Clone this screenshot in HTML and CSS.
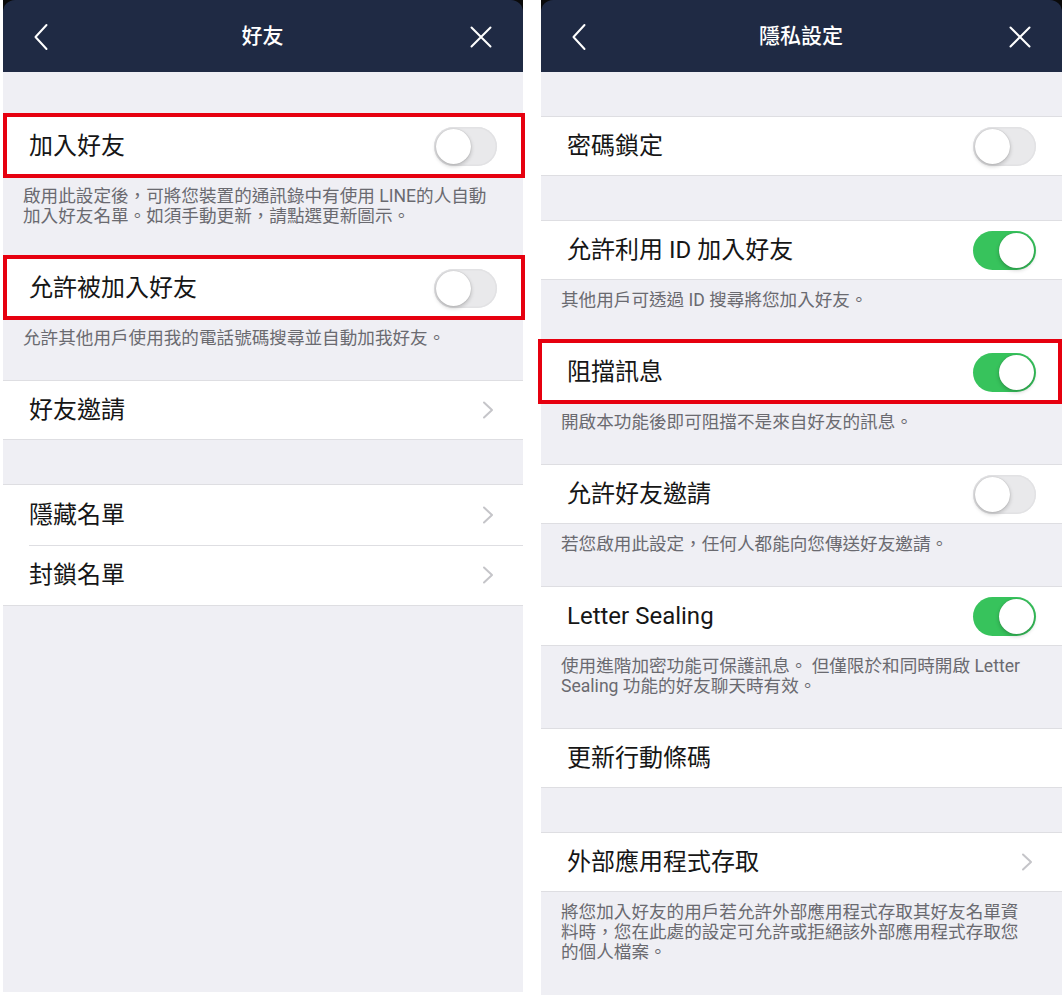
FILE: index.html
```html
<!DOCTYPE html>
<html lang="zh-Hant">
<head>
<meta charset="utf-8">
<title>LINE 設定</title>
<link rel="stylesheet" href="styles.css">
</head>
<body>
<div class="screen">
  <section class="panel panel-left">
    <header class="nav">
      <svg class="nav-back" width="16" height="28" viewBox="0 0 16 28"><path d="M13.5 2 L2.5 14 L13.5 26" /></svg>
      <h1 class="nav-title">好友</h1>
      <svg class="nav-close" width="22" height="22" viewBox="0 0 22 22"><path d="M1.5 1.5 L20.5 20.5 M20.5 1.5 L1.5 20.5" /></svg>
    </header>
    <div class="gap"></div>
    <div class="row hl hl-left"><span class="label">加入好友</span><span class="toggle off"></span></div>
    <p class="note">啟用此設定後，可將您裝置的通訊錄中有使用 LINE的人自動加入好友名單。如須手動更新，請點選更新圖示。</p>
    <div class="row hl hl-left"><span class="label">允許被加入好友</span><span class="toggle off"></span></div>
    <p class="note">允許其他用戶使用我的電話號碼搜尋並自動加我好友。</p>
    <div class="row"><span class="label">好友邀請</span><svg class="chev" width="12" height="18" viewBox="0 0 12 18"><path d="M2 1.5 L10 9 L2 16.5" /></svg></div>
    <div class="gap"></div>
    <div class="group">
      <div class="row grow"><span class="label">隱藏名單</span><svg class="chev" width="12" height="18" viewBox="0 0 12 18"><path d="M2 1.5 L10 9 L2 16.5" /></svg></div>
      <div class="row grow"><span class="label">封鎖名單</span><svg class="chev" width="12" height="18" viewBox="0 0 12 18"><path d="M2 1.5 L10 9 L2 16.5" /></svg></div>
    </div>
  </section>

  <section class="panel panel-right">
    <header class="nav">
      <svg class="nav-back" width="16" height="28" viewBox="0 0 16 28"><path d="M13.5 2 L2.5 14 L13.5 26" /></svg>
      <h1 class="nav-title">隱私設定</h1>
      <svg class="nav-close" width="22" height="22" viewBox="0 0 22 22"><path d="M1.5 1.5 L20.5 20.5 M20.5 1.5 L1.5 20.5" /></svg>
    </header>
    <div class="gap"></div>
    <div class="row"><span class="label">密碼鎖定</span><span class="toggle off"></span></div>
    <div class="gap"></div>
    <div class="row"><span class="label">允許利用 ID 加入好友</span><span class="toggle on"></span></div>
    <p class="note">其他用戶可透過 ID 搜尋將您加入好友。</p>
    <div class="row hl hl-right"><span class="label">阻擋訊息</span><span class="toggle on"></span></div>
    <p class="note">開啟本功能後即可阻擋不是來自好友的訊息。</p>
    <div class="row"><span class="label">允許好友邀請</span><span class="toggle off"></span></div>
    <p class="note">若您啟用此設定，任何人都能向您傳送好友邀請。</p>
    <div class="row"><span class="label">Letter Sealing</span><span class="toggle on"></span></div>
    <p class="note">使用進階加密功能可保護訊息。 但僅限於和同時開啟 Letter Sealing 功能的好友聊天時有效。</p>
    <div class="row"><span class="label">更新行動條碼</span></div>
    <div class="gap"></div>
    <div class="row"><span class="label">外部應用程式存取</span><svg class="chev" width="12" height="18" viewBox="0 0 12 18"><path d="M2 1.5 L10 9 L2 16.5" /></svg></div>
    <p class="note">將您加入好友的用戶若允許外部應用程式存取其好友名單資料時，您在此處的設定可允許或拒絕該外部應用程式存取您的個人檔案。</p>
  </section>
</div>
</body>
</html>
```

FILE: styles.css
```css
* { box-sizing: border-box; }

html, body {
  margin: 0;
  padding: 0;
  background: #ffffff;
}

body {
  font-family: Roboto, "Noto Sans CJK TC", sans-serif;
  color: #161616;
  width: 1062px;
  height: 1008px;
  overflow: hidden;
}

.screen {
  display: flex;
  align-items: flex-start;
  gap: 18px;
  padding-left: 3px;
}

.panel {
  display: flex;
  flex-direction: column;
  background: #efeff4;
  background-clip: padding-box;
}

.panel-left {
  width: 520px;
  height: 992px;
}

.panel-right {
  width: 521px;
  height: 995px;
}

/* navigation bar */
.nav {
  height: 72px;
  flex: none;
  display: grid;
  grid-template-columns: 1fr auto 1fr;
  align-items: center;
  padding: 0 31px 0 30px;
  background: #1f2a44;
  border-radius: 12px 12px 0 0;
  box-shadow: 0 -2px 0 0 #0a0a0a;
  position: relative;
}

.nav::before {
  content: "";
  position: absolute;
  left: 0;
  right: 0;
  top: 0;
  height: 12px;
  background: #0a0a0a;
  z-index: 0;
}

.nav::after {
  content: "";
  position: absolute;
  left: 0;
  right: 0;
  top: 0;
  bottom: 0;
  background: #1f2a44;
  border-radius: 12px 12px 0 0;
  z-index: 0;
}

.nav > * {
  position: relative;
  z-index: 1;
}

.nav-back path,
.nav-close path {
  fill: none;
  stroke: #ffffff;
  stroke-width: 2;
  stroke-linecap: round;
  stroke-linejoin: round;
}

.nav-back {
  justify-self: start;
  margin-top: 2px;
}

.nav-close {
  justify-self: end;
  margin-top: 2px;
}

.nav-title {
  margin: 0;
  font-size: 21px;
  font-weight: 500;
  color: #ffffff;
  line-height: 1;
}

.gap {
  height: 44px;
  flex: none;
}

/* rows */
.row {
  height: 60px;
  flex: none;
  display: flex;
  align-items: center;
  justify-content: space-between;
  padding: 0 26px 0 26px;
  background: #ffffff;
  border-top: 1px solid #dedee2;
  border-bottom: 1px solid #dedee2;
  position: relative;
}

.label {
  font-size: 24px;
  line-height: 1;
  color: #161616;
}

.group {
  background: #ffffff;
  border-top: 1px solid #dedee2;
  border-bottom: 1px solid #dedee2;
}

.group .row.grow {
  border: none;
}

.group .row.grow + .row.grow::before {
  content: "";
  position: absolute;
  left: 26px;
  right: 0;
  top: 0;
  height: 1px;
  background: #dedee2;
}

/* highlight boxes */
.hl::after {
  content: "";
  position: absolute;
  top: -4px;
  bottom: -3px;
  border: 4px solid #e6000f;
  pointer-events: none;
}

.hl-left::after {
  left: 0;
  right: -2px;
}

.hl-right::after {
  left: -3px;
  right: 0;
}

/* notes */
.note {
  margin: 0;
  padding: 10px 30px 32px 20px;
  font-size: 17.6px;
  line-height: 20px;
  color: #6a6a70;
  flex: none;
}

/* chevron */
.chev {
  margin-right: 3px;
}

.chev path {
  fill: none;
  stroke: #c5c5c9;
  stroke-width: 2;
  stroke-linecap: round;
  stroke-linejoin: round;
}

/* toggles */
.toggle {
  width: 63px;
  height: 39px;
  border-radius: 20px;
  position: relative;
  flex: none;
}

.toggle::after {
  content: "";
  position: absolute;
  top: 2px;
  width: 35px;
  height: 35px;
  border-radius: 50%;
  background: #ffffff;
  box-shadow: 0 2px 4px rgba(0, 0, 0, 0.22), 0 0 1px rgba(0, 0, 0, 0.25);
}

.toggle.off {
  background: #e9e9eb;
  box-shadow: inset 0 0 0 1.5px #e2e2e4;
}

.toggle.off::after {
  left: 2px;
}

.toggle.on {
  background: #37c35c;
}

.toggle.on::after {
  right: 2px;
}
```
